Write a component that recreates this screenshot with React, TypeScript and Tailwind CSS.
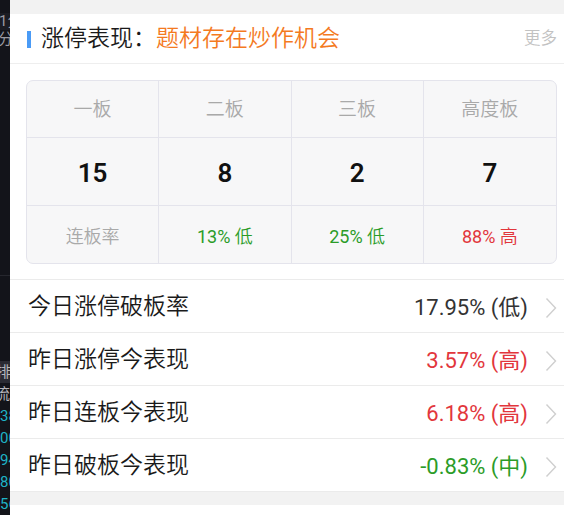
import React from "react";

const font = "font-['Roboto','Noto_Sans_CJK_SC',sans-serif]";

const stats = [
  { name: "一板", count: "15", num: "", word: "连板率", rateColor: "text-[#a9a9a9]" },
  { name: "二板", count: "8", num: "13% ", word: "低", rateColor: "text-[#2b9c28]" },
  { name: "三板", count: "2", num: "25% ", word: "低", rateColor: "text-[#2b9c28]" },
  { name: "高度板", count: "7", num: "88% ", word: "高", rateColor: "text-[#e2363c]" },
];

const rows = [
  { label: "今日涨停破板率", value: "17.95% (低)", color: "text-[#333333]" },
  { label: "昨日涨停今表现", value: "3.57% (高)", color: "text-[#e2363c]" },
  { label: "昨日连板今表现", value: "6.18% (高)", color: "text-[#e2363c]" },
  { label: "昨日破板今表现", value: "-0.83% (中)", color: "text-[#2b9c28]" },
];

function Chevron() {
  return (
    <svg width="12" height="22" viewBox="0 0 12 22" fill="none">
      <path d="M1.5 1.5 L10.5 11 L1.5 20.5" stroke="#cfcfcf" strokeWidth="1.4" />
    </svg>
  );
}

// strip of the app underneath, mostly hidden by the panel
function BackStrip() {
  return (
    <div className="w-[10px] shrink-0 bg-[#13141a] overflow-hidden flex flex-col text-[15px] leading-none whitespace-nowrap">
      <div className="h-[13px]" />
      <div className="h-[17px] bg-[#1b1c23] text-[#9a9aa2] flex items-center -ml-[1px]">1分钟</div>
      <div className="h-[18px] text-[#9a9aa2] flex items-center -ml-[2px]">分时</div>
      <div className="h-[228px] border-b border-[#26272e]" />
      <div className="h-[85px]" />
      <div className="h-[22px] bg-[#2a2b33] text-[#b5b5bb] flex items-center -ml-[4px]">排升</div>
      <div className="h-[22px] text-[#b5b5bb] flex items-center -ml-[5px]">流通</div>
      <div className="h-[22px] text-[#1fb3c6] flex items-center">38.2</div>
      <div className="h-[22px] text-[#1fb3c6] flex items-center">00.1</div>
      <div className="h-[22px] text-[#1fb3c6] flex items-center">94.5</div>
      <div className="h-[22px] text-[#1fb3c6] flex items-center">80.3</div>
      <div className="h-[22px] text-[#1fb3c6] flex items-center">56.7</div>
    </div>
  );
}

export default function App() {
  return (
    <div className={`w-[564px] h-[515px] flex overflow-hidden bg-white ${font}`}>
      <BackStrip />
      <div className="flex-1 flex flex-col">
        <div className="h-[14px] bg-[#f2f2f2]" />

        {/* header */}
        <div className="h-[50px] flex items-center pl-[17px] pr-[7px] pt-[2px] border-b border-[#eeeeee]">
          <div className="w-[4px] h-[17px] bg-[#4a9bf6] mr-[10px]" />
          <span className="text-[23px] font-[350] text-[#1a1a1a]">涨停表现：</span>
          <span className="text-[23px] font-[350] text-[#f47a1f]">题材存在炒作机会</span>
          <span className="ml-auto text-[16.5px] font-[350] text-[#c2c2c2]">更多</span>
        </div>

        {/* limit-up table */}
        <div className="mt-[16px] ml-[16px] mr-[7px] rounded-[7px] border border-[#e4e4ec] bg-[#f7f7f8] grid grid-cols-4">
          {stats.map((s, i) => (
            <div key={s.name} className={`flex flex-col ${i < 3 ? "border-r border-[#e4e4ec]" : ""}`}>
              <div className="h-[57px] pt-[3px] flex items-center justify-center border-b border-[#e4e4ec] text-[19px] font-[350] text-[#a9a9a9]">
                {s.name}
              </div>
              <div className="h-[68px] pt-[3px] flex items-center justify-center border-b border-[#e4e4ec] text-[26px] font-semibold text-[#111111]">
                {s.count}
              </div>
              <div className={`h-[57px] pt-[3px] flex items-center justify-center text-[18px] ${s.rateColor}`}>
                {s.num && <span className="whitespace-pre">{s.num}</span>}
                <span className="font-[350]">{s.word}</span>
              </div>
            </div>
          ))}
        </div>

        {/* rows */}
        <div className="mt-[15px] border-t border-[#ebebeb]">
          {rows.map((r) => (
            <div key={r.label} className="h-[53px] pt-[3px] flex items-center pl-[18px] pr-[7px] border-b border-[#ebebeb]">
              <span className="text-[23px] font-[350] text-[#1a1a1a]">{r.label}</span>
              <span className={`ml-auto text-[22px] ${r.color}`}>{r.value}</span>
              <span className="ml-[17px] flex items-center">
                <Chevron />
              </span>
            </div>
          ))}
        </div>

        <div className="h-[13px] bg-[#f2f2f2]" />
        <div className="flex-1 bg-white" />
      </div>
    </div>
  );
}
